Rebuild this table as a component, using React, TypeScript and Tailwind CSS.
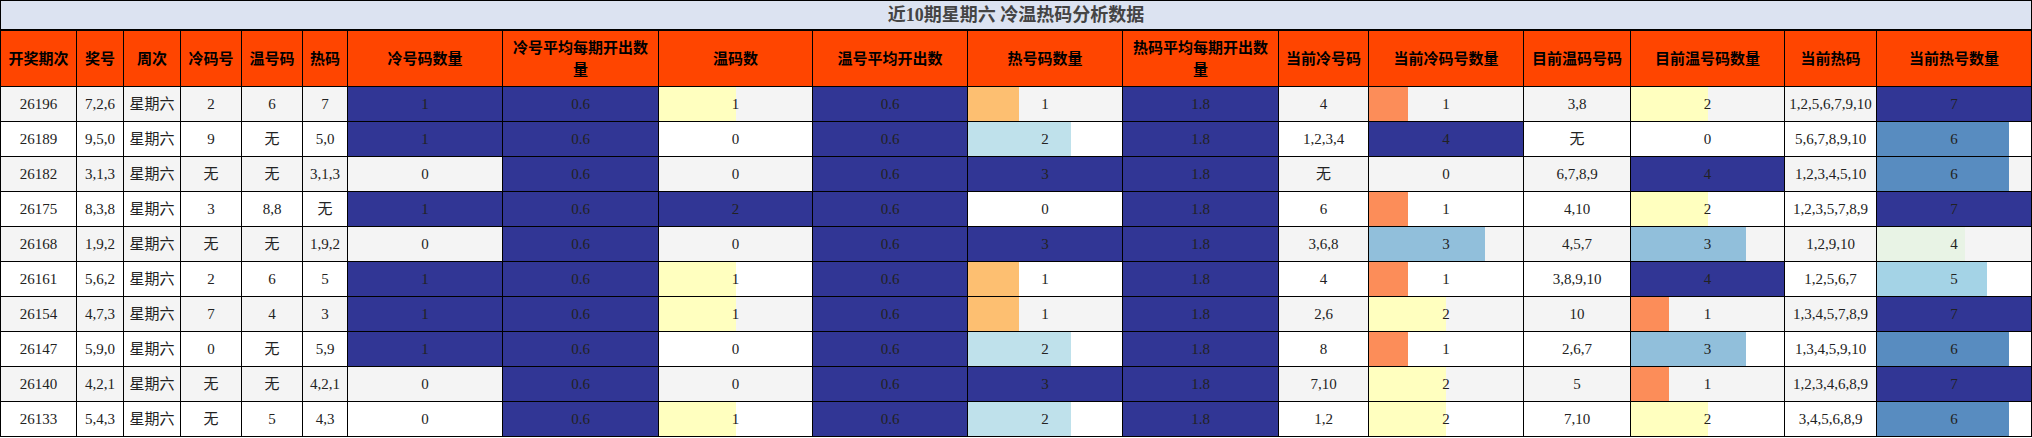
const headers = [
  '开奖期次', '奖号', '周次', '冷码号', '温号码', '热码',
  '冷号码数量', '冷号平均每期开出数量', '温码数', '温号平均开出数', '热号码数量', '热码平均每期开出数量',
  '当前冷号码', '当前冷码号数量', '目前温码号码', '目前温号码数量', '当前热码', '当前热号数量'
];

const widths = [76, 47, 57, 61, 61, 45, 155, 156, 154, 155, 155, 156, 90, 155, 107, 154, 92, 155];

const DARK = 'bg-[#313695]';

const scale4: Record<number, string> = { 1: 'bg-[#fc8d59]', 2: 'bg-[#ffffbf]', 3: 'bg-[#91bfdb]', 4: DARK };

// bar columns: max value and colour per value
const bars: Record<number, { max: number; colors: Record<number, string> }> = {
  6: { max: 1, colors: { 1: DARK } },
  7: { max: 0.6, colors: { 0.6: DARK } },
  8: { max: 2, colors: { 1: 'bg-[#ffffbf]', 2: DARK } },
  9: { max: 0.6, colors: { 0.6: DARK } },
  10: { max: 3, colors: { 1: 'bg-[#fdbf71]', 2: 'bg-[#bfe1eb]', 3: DARK } },
  11: { max: 1.8, colors: { 1.8: DARK } },
  13: { max: 4, colors: scale4 },
  15: { max: 4, colors: scale4 },
  17: { max: 7, colors: { 4: 'bg-[#e8f3e5]', 5: 'bg-[#a4d3e6]', 6: 'bg-[#588cc0]', 7: DARK } },
};

const rows: (string | number)[][] = [
  ['26196', '7,2,6', '星期六', '2', '6', '7', 1, 0.6, 1, 0.6, 1, 1.8, '4', 1, '3,8', 2, '1,2,5,6,7,9,10', 7],
  ['26189', '9,5,0', '星期六', '9', '无', '5,0', 1, 0.6, 0, 0.6, 2, 1.8, '1,2,3,4', 4, '无', 0, '5,6,7,8,9,10', 6],
  ['26182', '3,1,3', '星期六', '无', '无', '3,1,3', 0, 0.6, 0, 0.6, 3, 1.8, '无', 0, '6,7,8,9', 4, '1,2,3,4,5,10', 6],
  ['26175', '8,3,8', '星期六', '3', '8,8', '无', 1, 0.6, 2, 0.6, 0, 1.8, '6', 1, '4,10', 2, '1,2,3,5,7,8,9', 7],
  ['26168', '1,9,2', '星期六', '无', '无', '1,9,2', 0, 0.6, 0, 0.6, 3, 1.8, '3,6,8', 3, '4,5,7', 3, '1,2,9,10', 4],
  ['26161', '5,6,2', '星期六', '2', '6', '5', 1, 0.6, 1, 0.6, 1, 1.8, '4', 1, '3,8,9,10', 4, '1,2,5,6,7', 5],
  ['26154', '4,7,3', '星期六', '7', '4', '3', 1, 0.6, 1, 0.6, 1, 1.8, '2,6', 2, '10', 1, '1,3,4,5,7,8,9', 7],
  ['26147', '5,9,0', '星期六', '0', '无', '5,9', 1, 0.6, 0, 0.6, 2, 1.8, '8', 1, '2,6,7', 3, '1,3,4,5,9,10', 6],
  ['26140', '4,2,1', '星期六', '无', '无', '4,2,1', 0, 0.6, 0, 0.6, 3, 1.8, '7,10', 2, '5', 1, '1,2,3,4,6,8,9', 7],
  ['26133', '5,4,3', '星期六', '无', '5', '4,3', 0, 0.6, 1, 0.6, 2, 1.8, '1,2', 2, '7,10', 2, '3,4,5,6,8,9', 6],
];

const BarCell = ({ value, col }: { value: number; col: number }) => {
  const { max, colors } = bars[col];
  const color = colors[value];
  return (
    <td className="relative border border-black p-0 text-center">
      {value > 0 && color && (
        <div className={`absolute inset-y-0 left-0 ${color}`} style={{ width: `${(value / max) * 100}%` }} />
      )}
      <span className="relative">{value}</span>
    </td>
  );
};

export default function App() {
  return (
    <div className="w-[2032px] bg-white">
      <table
        className="w-[2032px] table-fixed border-collapse border border-black text-[15px] text-[#222]"
        style={{ fontFamily: '"Liberation Serif", "Noto Sans CJK SC", serif' }}
      >
        <colgroup>
          {widths.map((w, i) => (
            <col key={i} style={{ width: w }} />
          ))}
        </colgroup>
        <thead>
          <tr>
            <th
              colSpan={18}
              className="h-[29px] border border-b-2 border-black bg-[#dce3f1] p-0 text-center text-[18px] font-bold leading-[26px] text-[#444]"
            >
              近10期星期六 冷温热码分析数据
            </th>
          </tr>
          <tr>
            {headers.map(h => (
              <th
                key={h}
                className="h-[57px] border border-black bg-[#ff4500] px-1 text-center text-[15px] font-bold leading-[22px] text-black"
                style={{ fontFamily: '"Noto Sans CJK SC", sans-serif' }}
              >
                {h}
              </th>
            ))}
          </tr>
        </thead>
        <tbody>
          {rows.map((row, r) => (
            <tr key={r} className={r % 2 === 0 ? 'h-[35px] bg-[#f4f4f4]' : 'h-[35px] bg-white'}>
              {row.map((v, c) =>
                bars[c] ? (
                  <BarCell key={c} value={v as number} col={c} />
                ) : (
                  <td key={c} className="border border-black p-0 text-center whitespace-nowrap">
                    {v}
                  </td>
                )
              )}
            </tr>
          ))}
        </tbody>
      </table>
    </div>
  );
}
